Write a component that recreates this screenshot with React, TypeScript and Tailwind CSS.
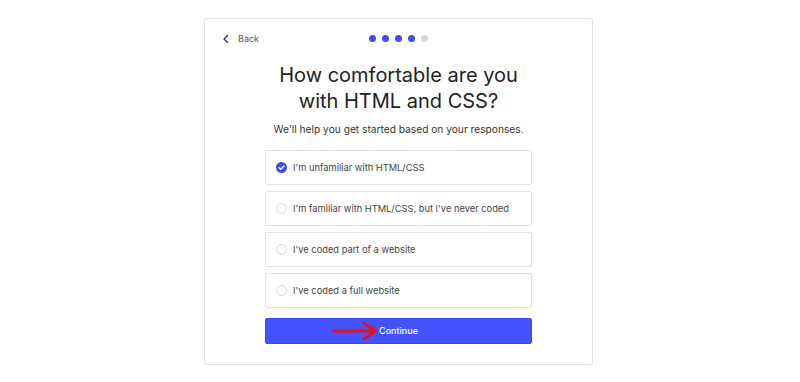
import React from "react";

const options = [
  "I'm unfamiliar with HTML/CSS",
  "I'm familiar with HTML/CSS, but I've never coded",
  "I've coded part of a website",
  "I've coded a full website",
];

export default function App() {
  return (
    <div className="w-[800px] h-[382px] bg-white overflow-hidden" style={{ fontFamily: "Inter, 'Noto Sans', sans-serif" }}>
      <div className="ml-[204px] mt-[18px] w-[389px] h-[347px] border border-[#e4e4e4] rounded-[2px] flex flex-col items-center">
        <div className="w-full grid grid-cols-[1fr_auto_1fr] items-center px-[17px] mt-[13px] h-[12px]">
          <div className="flex items-center gap-[8px] text-[9px] text-[#555]">
            <svg width="8" height="10" viewBox="0 0 8 10" fill="none">
              <path d="M5.5 1.5 L2 5 L5.5 8.5" stroke="#333" strokeWidth="1.3" strokeLinecap="round" strokeLinejoin="round" />
            </svg>
            <span>Back</span>
          </div>
          <div className="flex items-center gap-[6px]">
            <span className="w-[7px] h-[7px] rounded-full bg-[#3f4cf5]" />
            <span className="w-[7px] h-[7px] rounded-full bg-[#3f4cf5]" />
            <span className="w-[7px] h-[7px] rounded-full bg-[#3f4cf5]" />
            <span className="w-[7px] h-[7px] rounded-full bg-[#3f4cf5]" />
            <span className="w-[7px] h-[7px] rounded-full bg-[#d6d6d6]" />
          </div>
          <div />
        </div>
        <h1 className="mt-[18px] text-center text-[20px] leading-[26px] text-[#222] font-normal">
          How comfortable are you
          <br />
          with HTML and CSS?
        </h1>
        <p className="mt-[8px] text-[10.2px] leading-[14px] text-[#333]">We'll help you get started based on your responses.</p>
        <div className="mt-[14px] w-[267px] flex flex-col gap-[6px]">
          {options.map((o, i) => (
            <div key={o} className="h-[35px] border border-[#e2e2e2] rounded-[2px] flex items-center pl-[10px] gap-[6px] text-[9.3px] text-[#444] whitespace-nowrap">
              {i === 0 ? (
                <svg className="shrink-0" width="11" height="11" viewBox="0 0 12 12">
                  <circle cx="6" cy="6" r="6" fill="#3f4cf5" />
                  <path d="M3.3 6.2 L5.2 8 L8.7 4.3" stroke="#fff" strokeWidth="1.5" fill="none" strokeLinecap="round" strokeLinejoin="round" />
                </svg>
              ) : (
                <span className="shrink-0 w-[11px] h-[11px] rounded-full border border-[#d8d8d8]" />
              )}
              <span>{o}</span>
            </div>
          ))}
        </div>
        <div className="relative mt-[10px] w-[267px] h-[26px] bg-[#4353ff] border border-[#3a49f0] rounded-[2px] flex items-center justify-center text-white text-[9px] font-medium">
          Continue
          <svg className="absolute left-[66px] top-[2px]" width="46" height="20" viewBox="0 0 46 20" fill="none">
            <path d="M1.5 10 H42" stroke="#e8101a" strokeWidth="2.8" strokeLinecap="round" />
            <path d="M32 2 L43.5 10 L32 18" stroke="#e8101a" strokeWidth="2.8" strokeLinecap="round" strokeLinejoin="round" />
          </svg>
        </div>
      </div>
    </div>
  );
}
